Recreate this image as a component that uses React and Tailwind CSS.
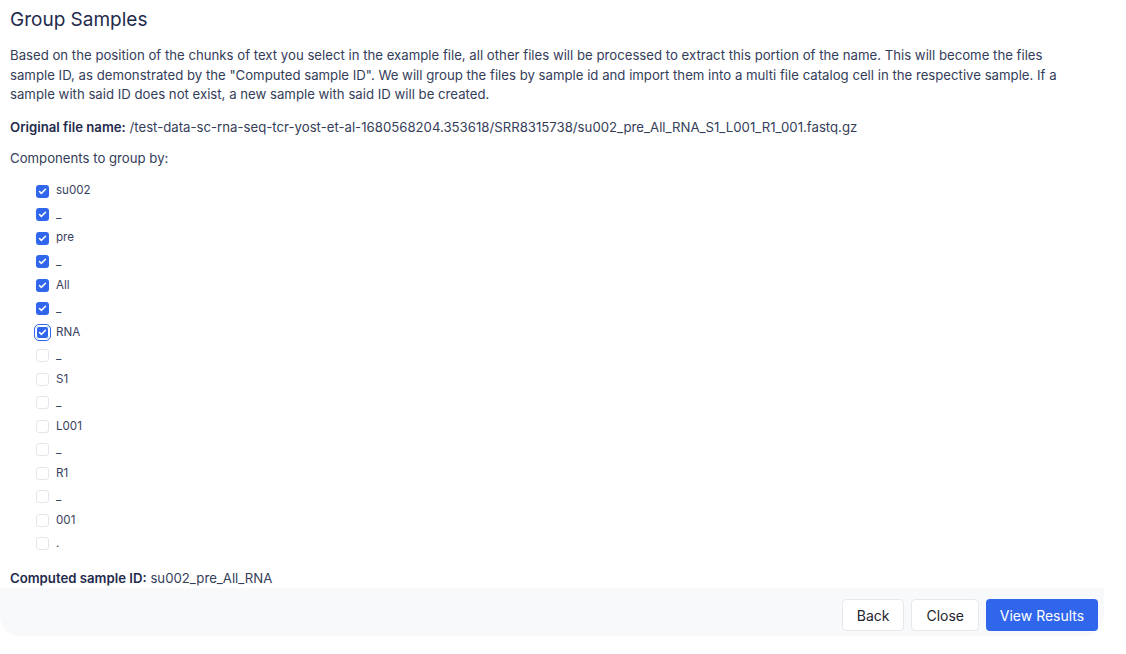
import { Check } from "lucide-react";

const PARTS = [
  { label: "su002", on: true },
  { label: "_", on: true },
  { label: "pre", on: true },
  { label: "_", on: true },
  { label: "All", on: true },
  { label: "_", on: true },
  { label: "RNA", on: true, focus: true },
  { label: "_", on: false },
  { label: "S1", on: false },
  { label: "_", on: false },
  { label: "L001", on: false },
  { label: "_", on: false },
  { label: "R1", on: false },
  { label: "_", on: false },
  { label: "001", on: false },
  { label: ".", on: false },
];

function Box({ on, focus }) {
  if (!on) {
    return <div className="w-[13px] h-[13px] rounded-[3px] border border-[#e3e6ec] bg-white shrink-0" />;
  }
  return (
    <div
      className={
        "w-[13px] h-[13px] rounded-[3px] bg-[#2f66ec] flex items-center justify-center shrink-0 " +
        (focus ? "outline outline-1 outline-[#2f66ec] outline-offset-[1px] ring-1 ring-white ring-inset" : "")
      }
    >
      <Check className="w-[9px] h-[9px] text-white" strokeWidth={4} />
    </div>
  );
}

export default function App() {
  const computed = PARTS.filter(p => p.on).map(p => p.label).join("");
  return (
    <div className="w-[1126px] h-[654px] bg-white" style={{ fontFamily: "Inter, 'Liberation Sans', sans-serif" }}>
      <div className="w-[1104px] bg-white rounded-b-[20px] overflow-hidden">
        <div className="pl-[10px] pr-[36px] pt-[6px]">
          <h1 className="text-[19px] leading-[28px] text-[#1f2b4d] font-normal">Group Samples</h1>
          <p className="mt-[12px] text-[13.2px] leading-[19.5px] text-[#343d5a]">
            Based on the position of the chunks of text you select in the example file, all other files will be processed to extract this portion of the name. This will become the files sample ID, as demonstrated by the "Computed sample ID". We will group the files by sample id and import them into a multi file catalog cell in the respective sample. If a sample with said ID does not exist, a new sample with said ID will be created.
          </p>
          <p className="mt-[13px] text-[13.2px] leading-[19.5px] text-[#343d5a]">
            <span className="font-semibold text-[#1f2b4d]">Original file name:</span> /test-data-sc-rna-seq-tcr-yost-et-al-1680568204.353618/SRR8315738/su002_pre_All_RNA_S1_L001_R1_001.fastq.gz
          </p>
          <p className="mt-[12px] text-[13.2px] leading-[19.5px] text-[#343d5a]">Components to group by:</p>
          <div className="mt-[11px] pl-[26px] flex flex-col">
            {PARTS.map((p, i) => (
              <div key={i} className="h-[23.53px] flex items-center gap-[7px]">
                <Box on={p.on} focus={p.focus} />
                <span className="text-[11.6px] text-[#3a4260] leading-none">{p.label}</span>
              </div>
            ))}
          </div>
          <p className="mt-[13px] text-[13.2px] leading-[19.5px] text-[#343d5a]">
            <span className="font-semibold text-[#1f2b4d]">Computed sample ID:</span> {computed}
          </p>
        </div>
        <div className="h-[48px] bg-[#f8f9fb] flex items-start justify-end gap-[7px] pt-[11px] pr-[6px]">
          <button className="h-[32px] px-[14px] rounded-[4px] bg-white border border-[#e6e8ee] text-[14px] text-[#1f2430]">Back</button>
          <button className="h-[32px] px-[14px] rounded-[4px] bg-white border border-[#e6e8ee] text-[14px] text-[#1f2430]">Close</button>
          <button className="h-[32px] w-[112px] rounded-[4px] bg-[#2f66ec] text-[14px] text-white">View Results</button>
        </div>
      </div>
    </div>
  );
}
